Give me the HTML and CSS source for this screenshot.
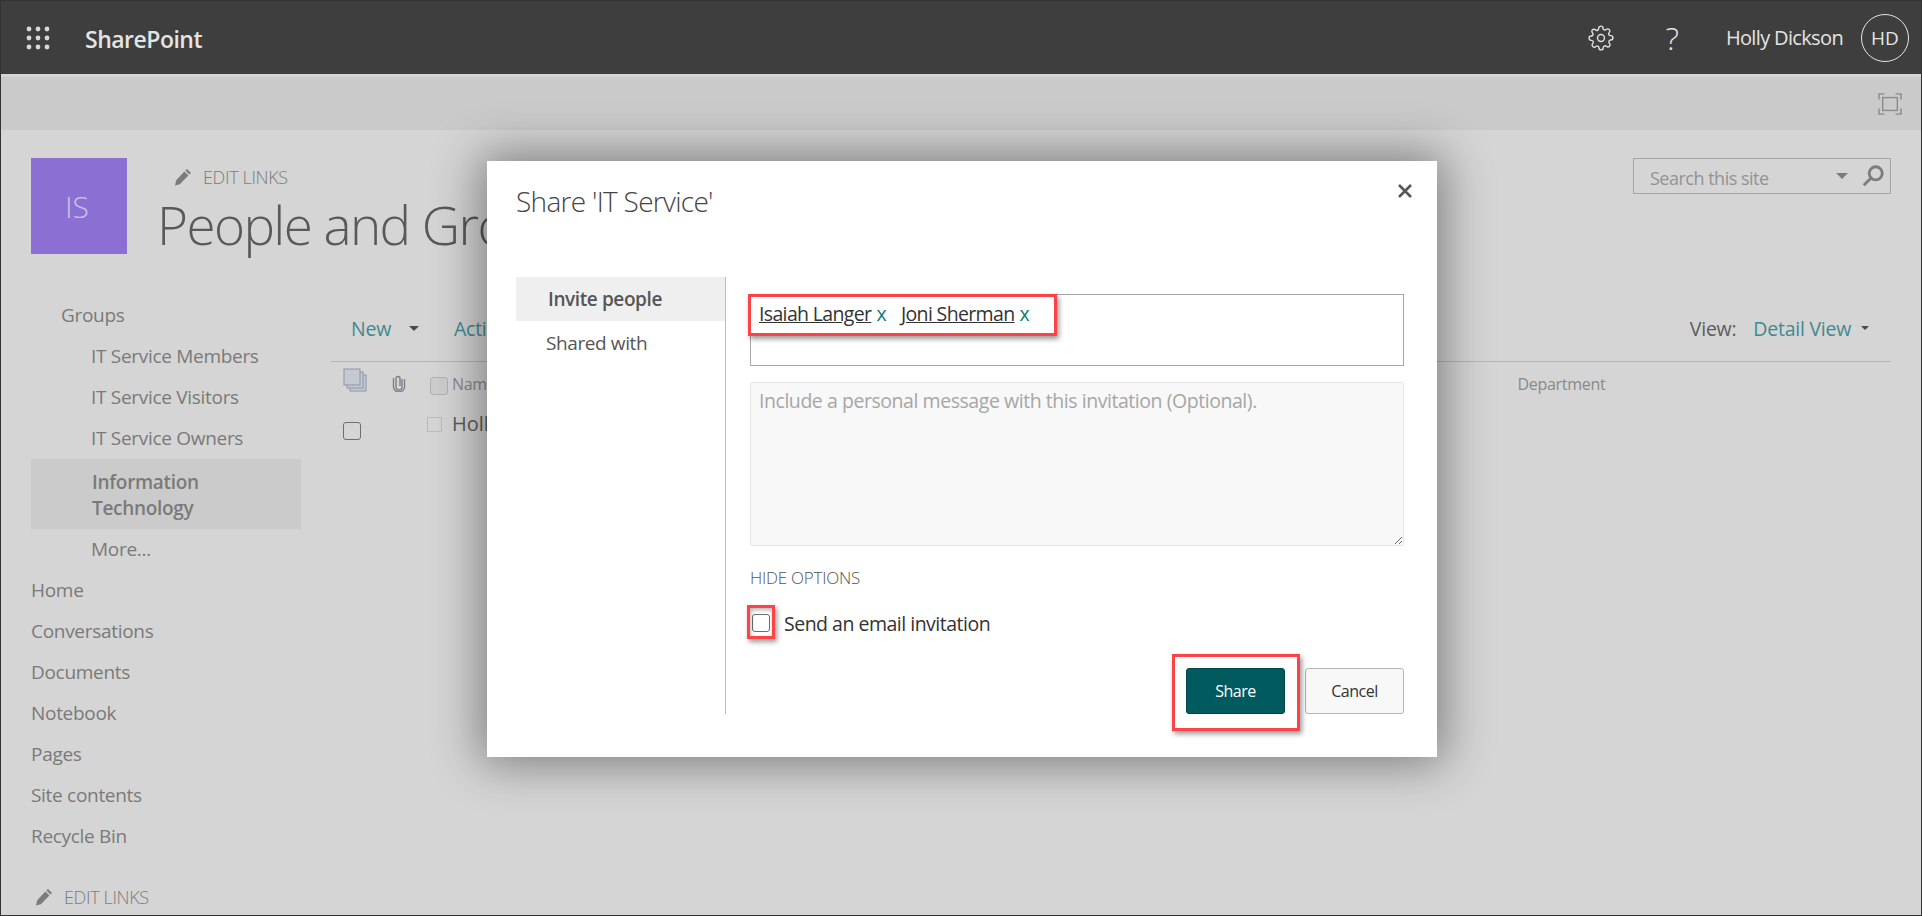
FILE: index.html
```html
<!DOCTYPE html>
<html lang="en">
<head>
    <meta charset="UTF-8">
    <title>People and Groups - IT Service</title>
    <link rel="stylesheet" href="styles.css">
</head>
<body>
<div class="frame">

    <header class="topbar">
        <svg class="launcher" width="24" height="24" viewBox="0 0 24 24">
            <circle cx="3" cy="3" r="2.4"/><circle cx="12" cy="3" r="2.4"/><circle cx="21" cy="3" r="2.4"/>
            <circle cx="3" cy="12" r="2.4"/><circle cx="12" cy="12" r="2.4"/><circle cx="21" cy="12" r="2.4"/>
            <circle cx="3" cy="21" r="2.4"/><circle cx="12" cy="21" r="2.4"/><circle cx="21" cy="21" r="2.4"/>
        </svg>
        <span class="brand">SharePoint</span>
        <svg class="gear" width="26" height="26" viewBox="0 0 24 24">
            <circle cx="12" cy="12" r="3.2"/>
            <path d="M19.4 15a1.65 1.65 0 0 0 .33 1.82l.06.06a2 2 0 1 1-2.83 2.83l-.06-.06a1.65 1.65 0 0 0-2.8 1.17V21a2 2 0 1 1-4 0v-.09a1.65 1.65 0 0 0-2.82-1.12l-.06.06a2 2 0 1 1-2.83-2.83l.06-.06a1.65 1.65 0 0 0-1.17-2.8H3a2 2 0 1 1 0-4h.09a1.65 1.65 0 0 0 1.12-2.82l-.06-.06a2 2 0 1 1 2.83-2.83l.06.06a1.65 1.65 0 0 0 2.8-1.17V3a2 2 0 1 1 4 0v.09a1.65 1.65 0 0 0 2.82 1.12l.06-.06a2 2 0 1 1 2.83 2.83l-.06.06a1.65 1.65 0 0 0 1.17 2.8H21a2 2 0 1 1 0 4h-.09a1.65 1.65 0 0 0-1.51 1z"/>
        </svg>
        <span class="help">?</span>
        <span class="user">Holly Dickson</span>
        <span class="avatar">HD</span>
    </header>

    <div class="ribbon">
        <svg class="focus" width="24" height="22" viewBox="0 0 26 24">
            <rect x="5" y="5" width="16" height="14"/>
            <path d="M1 7V1h6M19 1h6v6M25 17v6h-6M7 23H1v-6"/>
        </svg>
    </div>

    <div class="sitehead">
        <div class="sitelogo">IS</div>
        <div class="sitetitle">
            <a class="editlinks">
                <svg class="pencil" width="18" height="18" viewBox="0 0 18 18"><path d="M13 1l4 4-1.6 1.6-4-4zM10.4 3.6l4 4-8.6 8.6L1 17.500l1.200-5.300z"/></svg>
                EDIT LINKS
            </a>
            <h1>People and Groups</h1>
        </div>
        <div class="search">
            <span class="search-text">Search this site</span>
            <span class="caret caret-grey"></span>
            <svg class="magnifier" width="24" height="24" viewBox="0 0 22 22"><circle cx="13.500" cy="8.500" r="6"/><path d="M9 13l-6.500 6.500"/></svg>
        </div>
    </div>

    <div class="main">
        <nav class="sidenav">
            <a class="nav-item nav-group">Groups</a>
            <a class="nav-item nav-sub">IT Service Members</a>
            <a class="nav-item nav-sub">IT Service Visitors</a>
            <a class="nav-item nav-sub">IT Service Owners</a>
            <a class="nav-selected">Information Technology</a>
            <a class="nav-item nav-sub">More...</a>
            <a class="nav-item">Home</a>
            <a class="nav-item">Conversations</a>
            <a class="nav-item">Documents</a>
            <a class="nav-item">Notebook</a>
            <a class="nav-item">Pages</a>
            <a class="nav-item">Site contents</a>
            <a class="nav-item">Recycle Bin</a>
            <a class="editlinks editlinks-nav">
                <svg class="pencil" width="18" height="18" viewBox="0 0 18 18"><path d="M13 1l4 4-1.600 1.600-4-4zM10.400 3.600l4 4-8.600 8.600L1 17.500l1.200-5.300z"/></svg>
                EDIT LINKS
            </a>
        </nav>

        <section class="listarea">
            <div class="toolbar">
                <a class="teal">New</a>
                <span class="caret caret-dark"></span>
                <a class="teal actions">Actions</a>
                <span class="toolbar-right">View:</span>
                <a class="teal detailview">Detail View</a>
                <span class="caret caret-dark caret-small"></span>
            </div>
            <div class="listhead">
                <svg class="stack" width="24" height="24" viewBox="0 0 24 24">
                    <rect x="7" y="7" width="16" height="16"/><rect x="4" y="4" width="16" height="16"/><rect x="1" y="1" width="16" height="16"/>
                </svg>
                <svg class="clip" width="14" height="18" viewBox="0 0 14 18"><path d="M10 5v8a3 3 0 0 1-6 0V4.500a2 2 0 0 1 4 0V12"/><path d="M12.500 5v8a5.500 5 0 0 1-11 0V4"/></svg>
                <span class="headcheck"></span>
                <span class="headname">Name</span>
                <span class="headdept">Department</span>
            </div>
            <div class="listrow">
                <span class="rowcheck"></span>
                <span class="presence"></span>
                <span class="rowname">Holly Dickson</span>
            </div>
        </section>
    </div>

    <div class="modal">
        <h2 class="modal-title">Share 'IT Service'</h2>
        <svg class="modal-close" width="16" height="16" viewBox="0 0 16 16"><path d="M2 2l12 12M14 2L2 14"/></svg>
        <div class="modal-body">
            <ul class="tabs">
                <li class="tab tab-active">Invite people</li>
                <li class="tab">Shared with</li>
            </ul>
            <div class="pane">
                <div class="peoplepicker">
                    <a class="person">Isaiah Langer</a><span class="remove">x</span>
                    <a class="person person-next">Joni Sherman</a><span class="remove">x</span>
                </div>
                <textarea class="message" placeholder="Include a personal message with this invitation (Optional)."></textarea>
                <a class="hideoptions">HIDE OPTIONS</a>
                <label class="sendmail"><input type="checkbox"> Send an email invitation</label>
                <div class="buttons">
                    <button class="btn btn-primary">Share</button>
                    <button class="btn">Cancel</button>
                </div>
            </div>
        </div>
        <div class="callout callout-people"></div>
        <div class="callout callout-check"></div>
        <div class="callout callout-share"></div>
    </div>

</div>
</body>
</html>
```

FILE: styles.css
```css
* {
    box-sizing: border-box;
}
html, body {
    margin: 0;
    height: 100%;
    overflow: hidden;
}
body {
    font-family: "Open Sans", "Noto Sans", sans-serif;
    color: #7a7a7a;
}
a {
    display: block;
}
.frame {
    position: relative;
    width: 1922px;
    height: 916px;
    border: 1px solid #333;
    background: #d5d5d5;
    overflow: hidden;
}

/* top bar */
.topbar {
    height: 73px;
    background: #3e3e3e;
    color: #e4e4e4;
    display: flex;
    align-items: center;
    padding-left: 25px;
}
.launcher {
    fill: #d8d8d8;
}
.brand {
    margin-left: 35px;
    padding-top: 2px;
    font-size: 23px;
    font-weight: 600;
    letter-spacing: -0.5px;
}
.gear {
    margin-left: auto;
    fill: none;
    stroke: #e0e0e0;
    stroke-width: 1.3;
}
.help {
    margin-left: 51px;
    font-size: 32px;
    font-weight: 300;
}
.user {
    margin-left: 47px;
    font-size: 20px;
    letter-spacing: -0.65px;
}
.avatar {
    width: 48px;
    height: 48px;
    margin: 0 12px 0 18px;
    border: 1px solid #e4e4e4;
    border-radius: 50%;
    display: flex;
    align-items: center;
    justify-content: center;
    font-size: 19px;
}
.ribbon {
    height: 53px;
    margin-top: 3px;
    background: #cacaca;
    display: flex;
    align-items: center;
    justify-content: flex-end;
    padding-right: 19px;
}
.focus {
    fill: none;
    stroke: #8a8a8a;
    stroke-width: 1.5;
}

/* site header */
.sitehead {
    display: flex;
    padding: 28px 0 0 30px;
    height: 165px;
}
.sitelogo {
    width: 96px;
    height: 96px;
    background: #8b6fd3;
    color: #cfc4e8;
    font-size: 30px;
    font-weight: 300;
    padding-right: 4px;
    display: flex;
    align-items: center;
    justify-content: center;
}
.sitetitle {
    margin-left: 30px;
    padding-top: 8px;
}
.editlinks {
    font-size: 18px;
    font-weight: 300;
    color: #7c7c7c;
    letter-spacing: -0.35px;
    margin-left: 17px;
    line-height: 22px;
    display: flex;
    align-items: center;
    gap: 11px;
}
.pencil {
    fill: #7c7c7c;
}
h1 {
    margin: 0;
    font-size: 53px;
    font-weight: 300;
    line-height: 74px;
    letter-spacing: -1.6px;
    color: #595959;
    white-space: nowrap;
}
.search {
    margin-left: auto;
    margin-right: 30px;
    width: 258px;
    height: 36px;
    border: 1px solid #a5a5a5;
    display: flex;
    align-items: center;
    padding: 0 5px 0 16px;
}
.search-text {
    padding-top: 3px;
    font-size: 18px;
    color: #939393;
    letter-spacing: -0.5px;
}
.caret {
    width: 0;
    height: 0;
    border-left: 6px solid transparent;
    border-right: 6px solid transparent;
    border-top: 6px solid #4a4a4a;
}
.caret-grey {
    margin-left: auto;
    border-top-color: #7d7d7d;
}
.magnifier {
    margin-left: 13px;
    fill: none;
    stroke: #7d7d7d;
    stroke-width: 2.6;
}

/* left nav */
.main {
    display: flex;
}
.sidenav {
    width: 330px;
    padding: 0 0 0 30px;
    font-size: 19px;
    letter-spacing: -0.3px;
}
.nav-item {
    height: 41px;
    line-height: 41px;
}
.nav-group {
    padding-left: 30px;
}
.nav-sub {
    padding-left: 60px;
}
.nav-selected {
    width: 270px;
    height: 70px;
    background: #cbcbcb;
    padding: 10px 30px 0 61px;
    line-height: 26px;
    font-weight: 600;
}
.editlinks-nav {
    margin: 29px 0 0 4px;
    gap: 11px;
}

/* list */
.listarea {
    flex: 1;
    margin-right: 30px;
}
.toolbar {
    height: 67px;
    padding: 0 0 0 20px;
    border-bottom: 1px solid #b5b5b5;
    display: flex;
    align-items: center;
    font-size: 19.500px;
    color: #5c5c5c;
    letter-spacing: -0.25px;
}
.teal {
    color: #3f8a8f;
}
.toolbar .caret-dark {
    margin-left: 18px;
    border-left-width: 5px;
    border-right-width: 5px;
    border-top-width: 5px;
}
.actions {
    margin-left: 35px;
}
.toolbar-right {
    margin-left: auto;
}
.detailview {
    margin-left: 17px;
}
.toolbar .caret-small {
    margin: 0 22px 0 10px;
    border-left-width: 4px;
    border-right-width: 4px;
    border-top-width: 4px;
}
.listhead {
    position: relative;
    height: 46px;
    display: flex;
    align-items: flex-start;
    padding: 6px 0 0 12px;
    font-size: 16px;
    letter-spacing: -0.3px;
    color: #8a8a8a;
}
.stack {
    fill: #c4c9d2;
    stroke: #8d96a5;
    stroke-width: 1;
}
.clip {
    margin: 6px 0 0 25px;
    fill: none;
    stroke: #78808d;
    stroke-width: 1.4;
}
.headcheck {
    width: 18px;
    height: 18px;
    margin: 9px 0 0 24px;
    background: #cdcdcd;
    border: 1px solid #b2b2b2;
    border-radius: 3px;
}
.headname {
    margin: 5px 0 0 4px;
}
.headdept {
    margin: 5px 0 0 1022px;
}
.listrow {
    display: flex;
    align-items: flex-start;
    padding-left: 12px;
    font-size: 20px;
    color: #5c5c5c;
}
.rowcheck {
    width: 18px;
    height: 18px;
    margin-top: 14px;
    border: 1.500px solid #6f6f6f;
    border-radius: 3px;
}
.presence {
    width: 15px;
    height: 15px;
    margin: 9px 0 0 66px;
    border: 1px solid #bcbcbc;
}
.rowname {
    margin: 2px 0 0 10px;
}

/* share dialog */
.modal {
    position: absolute;
    left: 486px;
    top: 160px;
    width: 950px;
    height: 596px;
    background: #fff;
    box-shadow: 0 0 45px 6px rgba(0, 0, 0, 0.42);
    padding: 0 33px 0 29px;
    color: #333;
}
.modal-title {
    margin: 0;
    height: 116px;
    padding-top: 20px;
    font-size: 28px;
    font-weight: 300;
    line-height: 40px;
    color: #444;
    letter-spacing: -0.7px;
}
.modal-close {
    position: absolute;
    right: 24px;
    top: 22px;
    fill: none;
    stroke: #555;
    stroke-width: 2.600;
}
.modal-body {
    display: flex;
    height: 437px;
}
.tabs {
    width: 210px;
    margin: 0;
    padding: 0;
    list-style: none;
    border-right: 1px solid #bdbdbd;
    font-size: 19px;
    letter-spacing: -0.4px;
    color: #555;
}
.tab {
    height: 44px;
    line-height: 44px;
    padding-left: 30px;
}
.tab-active {
    background: #efefef;
    font-weight: 600;
    padding-left: 32px;
}
.pane {
    flex: 1;
    padding: 17px 0 0 24px;
}
.peoplepicker {
    height: 72px;
    border: 1px solid #a6a6a6;
    padding: 5px 8px;
    font-size: 19.500px;
    letter-spacing: -0.65px;
    line-height: 28px;
    display: flex;
    align-items: flex-start;
}
.person {
    color: #333;
    text-decoration: underline;
}
.person-next {
    margin-left: 15px;
}
.remove {
    margin-left: 5px;
    color: #0b7a7d;
}
.message {
    display: block;
    width: 100%;
    height: 164px;
    margin-top: 16px;
    padding: 5px 8px;
    background: #f8f8f8;
    border: 1px solid #e6e6e6;
    border-radius: 2px;
    font-family: inherit;
    font-size: 19.500px;
    letter-spacing: -0.45px;
    line-height: 26px;
}
.message::placeholder {
    color: #a6a6a6;
}
.hideoptions {
    margin-top: 21px;
    font-size: 17px;
    line-height: 22px;
    font-weight: 300;
    color: #555;
    letter-spacing: -0.25px;
}
.sendmail {
    display: flex;
    align-items: center;
    margin-top: 22px;
    height: 24px;
    font-size: 19.500px;
    letter-spacing: -0.5px;
    gap: 14px;
}
.sendmail input {
    appearance: none;
    width: 18px;
    height: 18px;
    margin: 0 0 0 2px;
    border: 1.500px solid #6f6f6f;
    border-radius: 3px;
}
.buttons {
    display: flex;
    justify-content: flex-end;
    gap: 20px;
    margin-top: 33px;
}
.btn {
    width: 99px;
    height: 46px;
    background: #f8f8f8;
    border: 1px solid #b5b5b5;
    border-radius: 3px;
    font-family: inherit;
    font-size: 16px;
    letter-spacing: -0.5px;
    color: #333;
}
.btn-primary {
    background: #005a5e;
    border-color: #00474a;
    color: #fff;
}

/* red annotation boxes */
.callout {
    position: absolute;
    border: 3px solid #fb4348;
    box-shadow: 2px 3px 5px rgba(0, 0, 0, 0.4);
}
.callout-people {
    left: 261px;
    top: 133px;
    width: 309px;
    height: 42px;
}
.callout-check {
    left: 260px;
    top: 444px;
    width: 28px;
    height: 34px;
    box-shadow: 2px 3px 5px rgba(0, 0, 0, 0.4), inset 1px 2px 4px rgba(0, 0, 0, 0.3);
}
.callout-share {
    left: 685px;
    top: 493px;
    width: 128px;
    height: 77px;
}
```
